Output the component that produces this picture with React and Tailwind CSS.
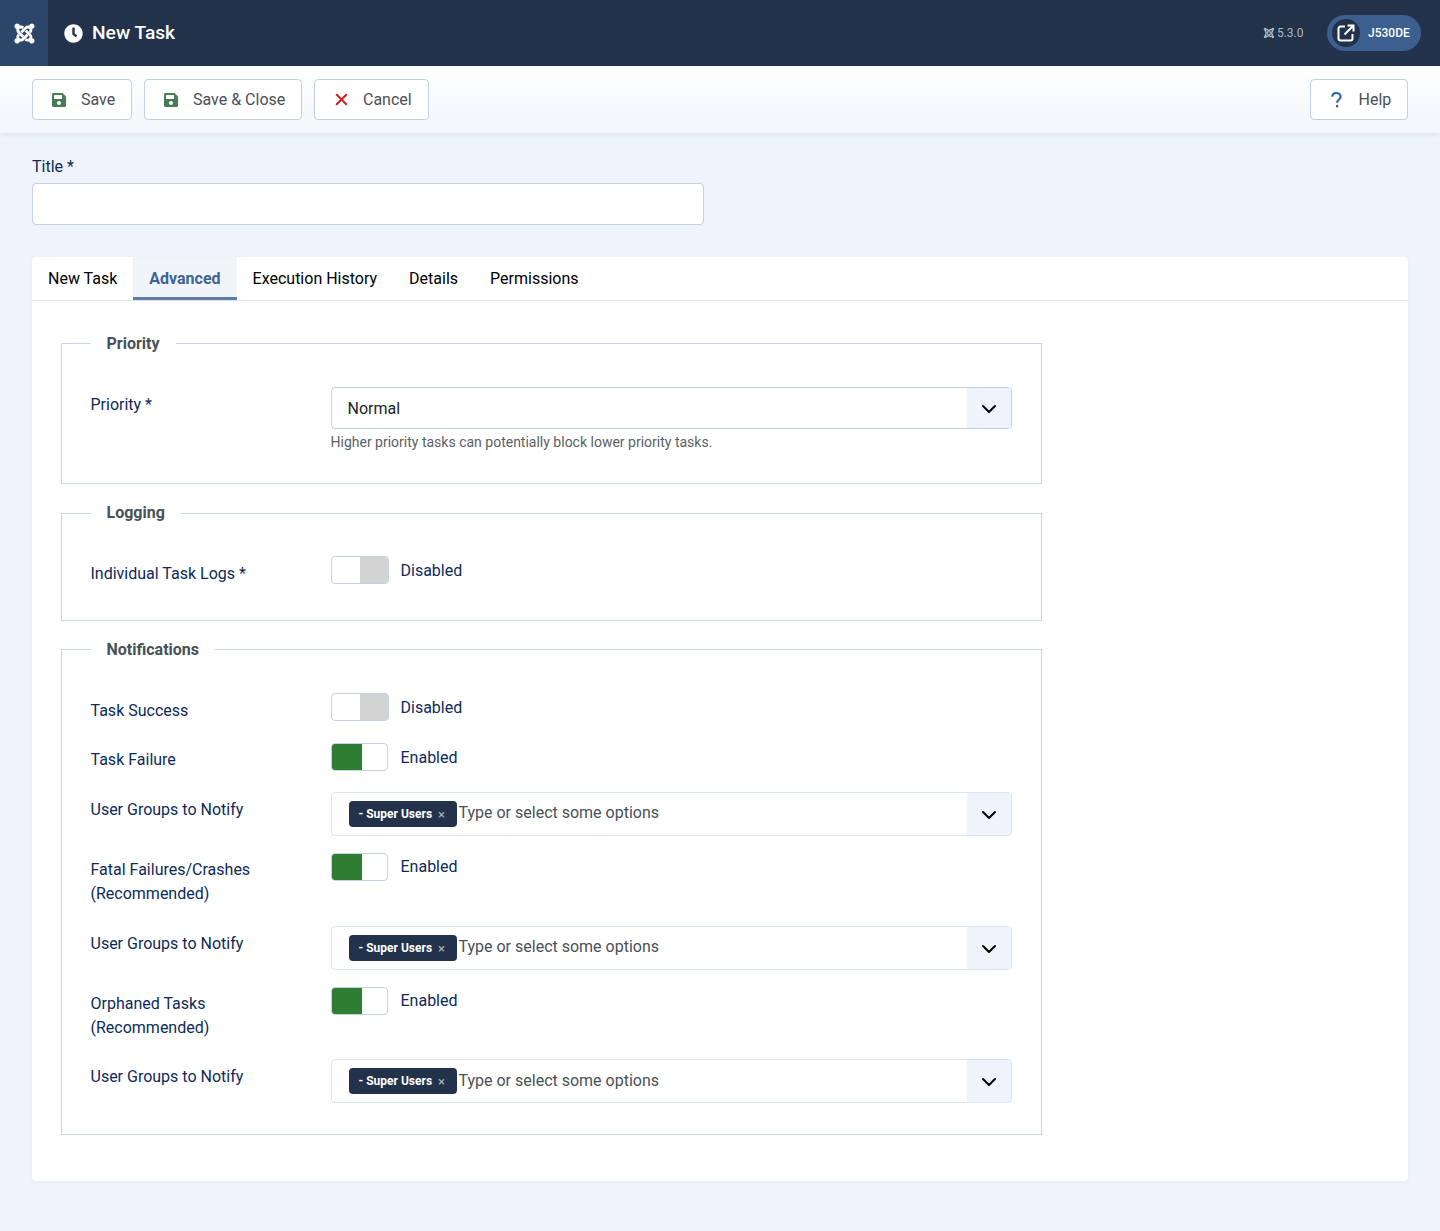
import React from "react";
import { FaJoomla, FaClock, FaSave } from "react-icons/fa";
import { ChevronDown, X } from "lucide-react";

const ToolbarButton = ({ icon, label, iconClass, className = "" }) => (
  <button className={"flex h-[41px] items-center rounded-[4px] border border-[#c5cfdf] bg-white pl-[19px] text-base text-[#495057] " + className}>
    <span className={"mr-[15px] flex w-[14px] justify-center text-[16px] " + iconClass}>{icon}</span>
    <span>{label}</span>
  </button>
);

const Switch = ({ on, textClass = "" }) => (
  <div className="flex items-center">
    {on ? (
      <div className="mr-[13px] flex h-[28px] w-[57px] overflow-hidden rounded-[4px] border border-[#c3d1e4] bg-white">
        <div className="h-full w-[30px] bg-[#2f7d32]" />
      </div>
    ) : (
      <div className="mr-3 flex h-[28px] w-[58px] justify-end overflow-hidden rounded-[4px] border border-[#c3d1e4] bg-white">
        <div className="h-full w-[28px] bg-[#d3d3d3]" />
      </div>
    )}
    <span className={"text-base leading-6 text-[#0d2a5c] " + textClass}>{on ? "Enabled" : "Disabled"}</span>
  </div>
);

const Row = ({ label, children, className = "", labelClass = "pt-[6px]" }) => (
  <div className={"flex " + className}>
    <label className={"w-[240px] shrink-0 text-base leading-6 text-[#0d2a5c] " + labelClass}>{label}</label>
    <div className="w-[681.5px]">{children}</div>
  </div>
);

const Arrow = () => (
  <div className="flex w-[44px] items-center justify-center bg-[#eff4fc] pt-[2px]">
    <ChevronDown size={24} strokeWidth={2} className="text-black" />
  </div>
);

const GroupsSelect = ({ textClass = "mb-[2px]" }) => (
  <div className="flex h-[44px] items-stretch overflow-hidden rounded-[4px] border border-[#dbe4f0] bg-white">
    <div className="flex flex-1 items-center pl-[17.5px]">
      <span className="flex h-[26px] w-[108px] items-center rounded-[4px] bg-[#22324a] pl-[9.5px] text-xs font-bold text-white">
        - Super Users
        <span className="ml-[6px] text-[13px] font-normal text-[#aab3c0]">×</span>
      </span>
      <span className={"ml-[1.5px] text-base text-[#495057] " + textClass}>Type or select some options</span>
    </div>
    <Arrow />
  </div>
);

const Fieldset = ({ legend, className = "", legendClass = "leading-6", children }) => (
  <fieldset className={"border border-[#c8d6e8] px-[28.5px] " + className}>
    <legend className={"h-[24px] px-[16px] text-base font-bold text-[#495057] " + legendClass}>{legend}</legend>
    {children}
  </fieldset>
);

const tabs = ["New Task", "Advanced", "Execution History", "Details", "Permissions"];

export default function App() {
  return (
    <div className="min-h-[1231px] bg-[#eff4fc] font-['Roboto',sans-serif]">
      <header className="flex h-[66px] items-center bg-[#22324a] text-white">
        <div className="flex h-full w-[48px] items-center justify-center bg-[#2c4568]">
          <FaJoomla size={23} />
        </div>
        <FaClock size={19} className="ml-[16px]" />
        <h1 className="ml-[9px] text-[19.2px] font-medium">New Task</h1>
        <div className="ml-auto flex items-center pr-[19px]">
          <FaJoomla size={12} className="text-[#a9b4c3]" />
          <span className="ml-[2px] text-xs text-[#a9b4c3]">5.3.0</span>
          <div className="ml-[23.5px] flex h-[36px] w-[94px] items-center rounded-full bg-[#3c5f8f] pl-[5px]">
            <div className="flex h-[28px] w-[28px] items-center justify-center rounded-full bg-[#22324a]">
              <svg width="18" height="18" viewBox="0 0 18 18" fill="none" stroke="currentColor" strokeWidth="2">
                <path d="M8 2.5H3.5a2 2 0 0 0-2 2v10a2 2 0 0 0 2 2h10a2 2 0 0 0 2-2V10" />
                <path d="M7.5 10.5 15.5 2.5M10.5 1.5h6v6" />
              </svg>
            </div>
            <span className="ml-[8px] text-xs font-medium">J530DE</span>
          </div>
        </div>
      </header>

      <div className="flex h-[67px] items-center justify-between bg-gradient-to-b from-white to-[#f2f5fb] px-[32px] shadow-[0_2px_6px_rgba(30,50,90,0.08)]">
        <div className="flex gap-3">
          <ToolbarButton className="w-[100px]" icon={<FaSave />} iconClass="text-[#457d54]" label="Save" />
          <ToolbarButton className="w-[158px]" icon={<FaSave />} iconClass="text-[#457d54]" label="Save & Close" />
          <ToolbarButton className="w-[115px]" icon={<X size={19} strokeWidth={2.6} className="shrink-0" />} iconClass="text-[#c52827]" label="Cancel" />
        </div>
        <ToolbarButton
          className="w-[98.5px]"
          icon={
            <svg width="11" height="16" viewBox="0 0 11 16" fill="none" stroke="currentColor" strokeWidth="2.2" className="mr-[1px]">
              <path d="M1.2 4.6A4.1 4.1 0 0 1 5.4 1c2.4 0 4.2 1.5 4.2 3.6 0 3-3.5 2.8-3.5 6.2" />
              <path d="M6.1 13v2.4" />
            </svg>
          }
          iconClass="text-[#2a69b8]"
          label="Help"
        />
      </div>

      <main className="px-[32px] pt-[22px]">
        <label className="block text-base leading-6 text-[#0d2a5c]">Title *</label>
        <input className="mt-[4px] block h-[42px] w-[672px] rounded-[4px] border border-[#c3d1e4] bg-white" />

        <div className="mt-[32px] rounded-[4px] bg-white pb-[46px] shadow-[0_1px_4px_rgba(30,50,90,0.06)]">
          <div className="flex h-[44px] border-b border-[#dbe4f0] text-base">
            {tabs.map((tab) => (
              <div
                key={tab}
                className={
                  tab === "Advanced"
                    ? "flex h-[43px] items-center border-b-[3px] border-[#5d7ca8] bg-[#f1f4f9] px-4 pt-[3px] font-bold text-[#3e6396]"
                    : "flex h-[43px] items-center px-4 text-black"
                }
              >
                {tab}
              </div>
            ))}
          </div>

          <div className="ml-[29px] w-[980px] pt-[30px]">
            <Fieldset legend="Priority" legendClass="leading-[26px]" className="h-[153px]">
              <Row label="Priority *" className="pt-[32.4px]">
                <div className="flex h-[42px] items-stretch overflow-hidden rounded-[4px] border border-[#c3d1e4] bg-white">
                  <div className="flex flex-1 items-center pt-[2px] pl-[16px] text-base text-[#212529]">Normal</div>
                  <Arrow />
                </div>
                <p className="mt-[3px] text-sm leading-5 text-[#5a5f66]">
                  Higher priority tasks can potentially block lower priority tasks.
                </p>
              </Row>
            </Fieldset>

            <Fieldset legend="Logging" className="mt-[17px] h-[120px]">
              <Row label="Individual Task Logs *" className="pt-[31.4px]">
                <Switch textClass="pt-[2px]" />
              </Row>
            </Fieldset>

            <Fieldset legend="Notifications" legendClass="leading-[26px]" className="mt-[16px] h-[498px]">
              <Row label="Task Success" className="mb-[20px] pt-[32.4px]">
                <Switch textClass="pt-[2px]" />
              </Row>
              <Row label="Task Failure" labelClass="pt-[5px]" className="mb-[20px]">
                <Switch on textClass="pt-[2px]" />
              </Row>
              <Row label="User Groups to Notify" className="mb-[17px]">
                <GroupsSelect />
              </Row>
              <Row label={<>Fatal Failures/Crashes<br />(Recommended)</>} labelClass="pt-[5px]" className="mb-[20px]">
                <Switch on />
              </Row>
              <Row label="User Groups to Notify" className="mb-[17px]">
                <GroupsSelect />
              </Row>
              <Row label={<>Orphaned Tasks<br />(Recommended)</>} labelClass="pt-[5px]" className="mb-[19px]">
                <Switch on />
              </Row>
              <Row label="User Groups to Notify">
                <GroupsSelect textClass="mb-0" />
              </Row>
            </Fieldset>
          </div>
        </div>
      </main>
    </div>
  );
}
